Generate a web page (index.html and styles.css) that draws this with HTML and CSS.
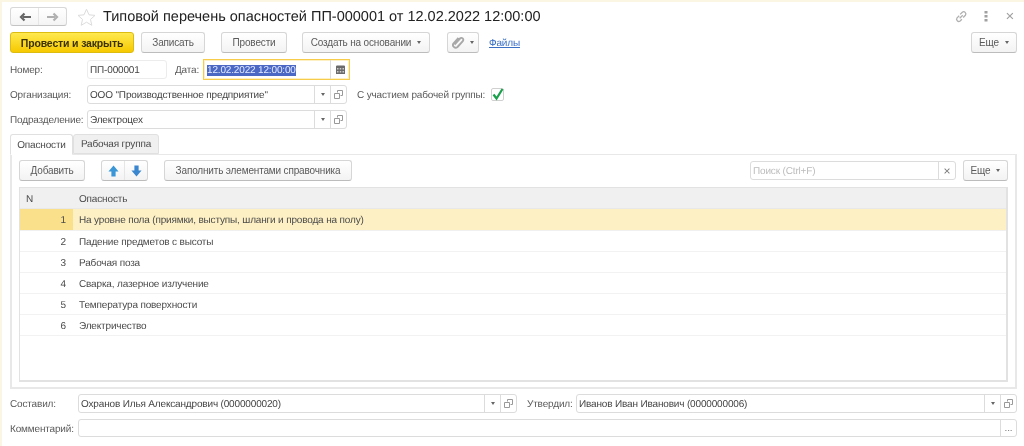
FILE: index.html
```html
<!DOCTYPE html>
<html lang="ru">
<head>
<meta charset="utf-8">
<title>Типовой перечень опасностей</title>
<link rel="stylesheet" href="styles.css">
</head>
<body>
<div class="form">
  <header class="titlebar">
    <div class="nav">
      <span class="nav-btn"><svg width="14" height="12" viewBox="0 0 14 12"><path d="M13 6H5M6.500 2.500 3 6l3.500 3.500" fill="none" stroke="#666" stroke-width="2.200"/></svg></span>
      <span class="nav-btn"><svg width="14" height="12" viewBox="0 0 14 12"><path d="M1 6h8M7.500 2.500 11 6l-3.500 3.500" fill="none" stroke="#b0b0b0" stroke-width="2.200"/></svg></span>
    </div>
    <svg class="star" width="19" height="18" viewBox="0 0 19 18"><path d="M9.500 1.200 12 6.800l6 .6-4.500 4 1.300 5.900-5.300-3.100-5.300 3.100 1.300-5.900L1 7.400l6-.6z" fill="#fff" stroke="#dcdcdc"/></svg>
    <h1 class="title">Типовой перечень опасностей ПП-000001 от 12.02.2022 12:00:00</h1>
    <div class="window-tools">
      <svg width="14" height="14" viewBox="0 0 16 16"><path d="M6.500 9.500 10 6M6 6.500 3.500 9a2.500 2.500 0 0 0 3.500 3.500L9 10.500M7 5l2.500-2.500A2.500 2.500 0 0 1 13 6l-2.500 2.500" fill="none" stroke="#b0b0b0" stroke-width="1.500"/></svg>
      <svg class="tool-more" width="4" height="11" viewBox="0 0 4 11"><path d="M0.500 0h3v2.500h-3zM0.500 4h3v2.500h-3zM0.500 8h3v2.500h-3z" fill="#a0a0a0"/></svg>
      <span class="close">×</span>
    </div>
  </header>

  <div class="commands">
    <button class="btn btn-primary">Провести и закрыть</button>
    <button class="btn btn-save">Записать</button>
    <button class="btn btn-post">Провести</button>
    <button class="btn btn-create">Создать на основании<i class="caret"></i></button>
    <button class="btn btn-clip"><svg width="13" height="13" viewBox="0 0 13 13"><path d="M2.500 8.500 8 2.500a1.900 1.900 0 0 1 2.800 2.600L5.500 11a2.700 2.700 0 0 1-3.900-3.700L6.500 2" fill="none" stroke="#a8a8a8" stroke-width="1.900"/></svg><i class="caret caret-clip"></i></button>
    <a class="link" href="#">Файлы</a>
    <button class="btn btn-more btn-more-top">Еще<i class="caret"></i></button>
  </div>

  <div class="row row-number">
    <label class="lbl lbl-main">Номер:</label>
    <div class="field field-number"><span class="val">ПП-000001</span></div>
    <label class="lbl lbl-date">Дата:</label>
    <div class="field field-date">
      <span class="val"><span class="sel">12.02.2022 12:00:00</span></span>
      <span class="addon"><svg width="9" height="9" viewBox="0 0 9 9"><path d="M0 1.500a1 1 0 0 1 1-1h7a1 1 0 0 1 1 1V9H0z" fill="#6a6a6a"/><path d="M1 3h1.500v1.500H1zM3.750 3h1.500v1.500h-1.500zM6.500 3H8v1.500H6.500zM1 6h1.500v1.500H1zM3.750 6h1.500v1.500h-1.500zM6.500 6H8v1.500H6.500z" fill="#ccc"/></svg></span>
    </div>
  </div>

  <div class="row row-org">
    <label class="lbl lbl-main">Организация:</label>
    <div class="field field-ref">
      <span class="val">ООО "Производственное предприятие"</span>
      <span class="addon"><i class="caret"></i></span>
      <span class="addon"><svg width="9" height="9" viewBox="0 0 9 9"><path d="M3.500 2.500v-2h5v5h-2M.5 3.500h5v5h-5z" fill="none" stroke="#999"/></svg></span>
    </div>
    <label class="lbl lbl-check">С участием рабочей группы:</label>
    <span class="check"><svg width="13" height="13" viewBox="0 0 13 13"><path d="M2.500 6.500 5.500 10.500 11.500 1" fill="none" stroke="#18a04a" stroke-width="2.200"/></svg></span>
  </div>

  <div class="row row-dep">
    <label class="lbl lbl-main">Подразделение:</label>
    <div class="field field-ref">
      <span class="val">Электроцех</span>
      <span class="addon"><i class="caret"></i></span>
      <span class="addon"><svg width="9" height="9" viewBox="0 0 9 9"><path d="M3.500 2.500v-2h5v5h-2M.5 3.500h5v5h-5z" fill="none" stroke="#999"/></svg></span>
    </div>
  </div>

  <nav class="tabs">
    <span class="tab tab-active">Опасности</span>
    <span class="tab tab-second">Рабочая группа</span>
  </nav>

  <section class="panel">
    <div class="panel-bar">
      <button class="btn btn-add">Добавить</button>
      <div class="arrows">
        <span class="arrow-btn"><svg width="11" height="12" viewBox="0 0 12 13"><path d="M6 0.500 11.500 7H8.300v5.500H3.700V7H.5z" fill="#3a96d6"/></svg></span>
        <span class="arrow-btn"><svg width="11" height="12" viewBox="0 0 12 13"><path d="M6 12.500 11.500 6H8.300V.5H3.700V6H.5z" fill="#3a86cf"/></svg></span>
      </div>
      <button class="btn btn-fill">Заполнить элементами справочника</button>
      <div class="field field-search"><span class="val placeholder">Поиск (Ctrl+F)</span><span class="addon addon-x">×</span></div>
      <button class="btn btn-more btn-more-table">Еще<i class="caret"></i></button>
    </div>
    <div class="table">
      <div class="t-row t-head"><span class="c-n c-n-head">N</span><span class="c-t">Опасность</span></div>
      <div class="t-row t-sel"><span class="c-n">1</span><span class="c-t">На уровне пола (приямки, выступы, шланги и провода на полу)</span></div>
      <div class="t-row"><span class="c-n">2</span><span class="c-t">Падение предметов с высоты</span></div>
      <div class="t-row"><span class="c-n">3</span><span class="c-t">Рабочая поза</span></div>
      <div class="t-row"><span class="c-n">4</span><span class="c-t">Сварка, лазерное излучение</span></div>
      <div class="t-row"><span class="c-n">5</span><span class="c-t">Температура поверхности</span></div>
      <div class="t-row"><span class="c-n">6</span><span class="c-t">Электричество</span></div>
    </div>
  </section>

  <div class="row row-author">
    <label class="lbl lbl-foot">Составил:</label>
    <div class="field field-author">
      <span class="val">Охранов Илья Александрович (0000000020)</span>
      <span class="addon"><i class="caret"></i></span>
      <span class="addon"><svg width="9" height="9" viewBox="0 0 9 9"><path d="M3.500 2.500v-2h5v5h-2M.5 3.500h5v5h-5z" fill="none" stroke="#999"/></svg></span>
    </div>
    <label class="lbl lbl-appr">Утвердил:</label>
    <div class="field field-appr">
      <span class="val">Иванов Иван Иванович (0000000006)</span>
      <span class="addon"><i class="caret"></i></span>
      <span class="addon"><svg width="9" height="9" viewBox="0 0 9 9"><path d="M3.500 2.500v-2h5v5h-2M.5 3.500h5v5h-5z" fill="none" stroke="#999"/></svg></span>
    </div>
  </div>

  <div class="row row-comment">
    <label class="lbl lbl-foot">Комментарий:</label>
    <div class="field field-comment"><span class="val"></span><span class="addon addon-dots">...</span></div>
  </div>
</div>
</body>
</html>
```

FILE: styles.css
```css
* { box-sizing: border-box; }
html, body { margin: 0; padding: 0; }
body {
  width: 1024px;
  height: 446px;
  overflow: hidden;
  background: #fbf6e4;
  font-family: "Liberation Sans", Arial, sans-serif;
  font-size: 10px;
  letter-spacing: -0.16px;
  color: #4a4a4a;
  text-rendering: geometricPrecision;
}
.form {
  margin: 2px 0 0 2px;
  width: 1022px;
  height: 444px;
  background: #fff;
  padding: 5px 7px 0 8px;
  filter: blur(0.4px);
}
button { font: inherit; color: inherit; letter-spacing: inherit; }

.titlebar { display: flex; align-items: center; height: 19px; }
.nav {
  display: flex;
  width: 57px;
  height: 19px;
  border: 1px solid #d8d8d8;
  border-bottom-color: #c4c4c4;
  border-radius: 3px;
  background: linear-gradient(#fff, #f4f4f4);
}
.nav-btn { flex: 1; display: flex; align-items: center; justify-content: center; }
.nav-btn + .nav-btn { border-left: 1px solid #e6e6e6; }
.star { margin-left: 10px; }
.title {
  margin: 0 0 0 7px;
  font-size: 14.500px;
  font-weight: 400;
  letter-spacing: 0;
  color: #222;
  white-space: nowrap;
}
.window-tools { margin-left: auto; display: flex; align-items: center; color: #a0a0a0; }
.tool-more { margin-left: 16px; }
.close { margin-left: 17px; margin-right: 3px; font-size: 15px; line-height: 15px; }

.btn {
  display: inline-flex;
  align-items: center;
  justify-content: center;
  padding: 0;
  height: 21px;
  border: 1px solid #d6d6d6;
  border-bottom-color: #bcbcbc;
  border-radius: 3px;
  background: linear-gradient(#fff, #f3f3f3);
  white-space: nowrap;
  color: #5a5a5a;
}
.commands { display: flex; align-items: center; margin-top: 6px; height: 21px; }
.btn-primary {
  width: 124px;
  font-weight: 700;
  font-size: 10.500px;
  color: #3b3200;
  border-color: #dcbc10;
  background: linear-gradient(#ffe94f, #f6c900);
}
.btn-save { width: 64px; margin-left: 7px; }
.btn-post { width: 66px; margin-left: 16px; }
.btn-create { width: 128px; margin-left: 15px; }
.btn-clip { width: 32px; margin-left: 17px; }
.link { margin-left: 10px; padding-top: 2px; color: #3a6fc4; text-decoration: underline; }
.btn-more { width: 46px; }
.btn-more-top { margin-left: auto; }
.caret {
  display: inline-block;
  margin-left: 6px;
  width: 0;
  height: 0;
  border: 2.500px solid transparent;
  border-top: 3px solid #666;
  border-bottom: 0;
}
.caret-clip { margin-left: 5px; }

.row { display: flex; align-items: center; }
.row-number { margin-top: 6px; height: 21px; }
.row-org { margin-top: 4px; height: 21px; }
.row-dep { margin-top: 4px; height: 21px; }
.lbl { white-space: nowrap; color: #5a5a5a; padding-top: 2px; }
.lbl-main { width: 77px; }
.lbl-date { margin-left: 8px; width: 28px; }
.lbl-check { margin-left: 10px; }
.check {
  display: flex;
  margin-left: 6px;
  width: 13px;
  height: 13px;
  border: 1px solid #d0d0d0;
  border-radius: 2px;
}
.check svg { flex: none; margin: -1px; }
.lbl-foot { width: 68px; }
.lbl-appr { margin-left: 10px; width: 49px; }

.field {
  display: flex;
  height: 19px;
  border: 1px solid #dcdcdc;
  border-radius: 3px;
  background: #fff;
  overflow: hidden;
}
.val { flex: 1; padding-left: 2px; line-height: 20px; white-space: nowrap; overflow: hidden; color: #444; }
.addon {
  flex: none;
  width: 16px;
  display: flex;
  align-items: center;
  justify-content: center;
  border-left: 1px solid #dcdcdc;
}
.addon .caret { margin-left: 0; }
.field-number { width: 80px; border-color: #ececec; }
.field-date {
  width: 147px;
  height: 21px;
  border: 1px solid #f6cc4a;
  border-radius: 0;
  box-shadow: inset 0 0 0 1px #fdf0c4;
}
.field-date .val { padding-left: 3px; line-height: 22px; }
.field-date .addon { width: 19px; }
.sel { background: #4a68c4; color: #e4eaff; }
.field-ref { width: 260px; }
.placeholder { color: #bcbcbc; }

.tabs { display: flex; margin-top: 4px; height: 21px; position: relative; z-index: 1; }
.tab { display: flex; align-items: center; justify-content: center; height: 21px; padding-top: 1px; border: 1px solid #e0e0e0; border-radius: 3px 3px 0 0; }
.tab-active { width: 63px; background: #fff; border-bottom-color: #fff; }
.tab-second { width: 86px; background: #f0f0f0; height: 20px; }

.panel {
  margin-top: -1px;
  width: 1007px;
  height: 235px;
  border: 2px solid #e8e8e8;
  border-width: 1px 2px 2px 2px;
  padding: 5px 7px 0 7px;
}
.panel-bar { display: flex; align-items: center; height: 21px; }
.btn-add { width: 66px; }
.arrows { display: flex; margin-left: 16px; width: 47px; height: 21px; border: 1px solid #d6d6d6; border-bottom-color: #bcbcbc; border-radius: 3px; background: linear-gradient(#fff, #f3f3f3); }
.arrow-btn { flex: 1; display: flex; align-items: center; justify-content: center; }
.arrow-btn + .arrow-btn { border-left: 1px solid #e6e6e6; }
.btn-fill { width: 188px; margin-left: 16px; }
.field-search { width: 206px; margin-left: auto; }
.addon-x { color: #777; font-size: 12px; width: 17px; }
.btn-more-table { width: 45px; margin-left: 7px; }

.table {
  margin-top: 6px;
  height: 195px;
  border: 2px solid #e2e2e2;
  border-width: 1px 2px 2px 1px;
}
.t-row { display: flex; height: 21px; line-height: 23px; border-bottom: 1px solid #f2f2f2; }
.t-head { background: #f0f0f0; border-bottom-color: #e8e8e8; }
.t-sel { height: 22px; background: #fdf0c4; line-height: 24px; border-bottom-color: #f0f0f0; }
.c-n { width: 53px; flex: none; text-align: right; padding-right: 7px; }
.c-n-head { text-align: left; padding-left: 6px; }
.t-sel .c-n { background: #fbe08c; }
.c-t { padding-left: 6px; white-space: nowrap; }

.row-author { margin-top: 5px; height: 19px; }
.field-author { width: 439px; }
.field-appr { width: 441px; }
.row-comment { margin-top: 6px; height: 18px; }
.field-comment { width: 939px; height: 18px; }
.addon-dots { color: #777; }
```
